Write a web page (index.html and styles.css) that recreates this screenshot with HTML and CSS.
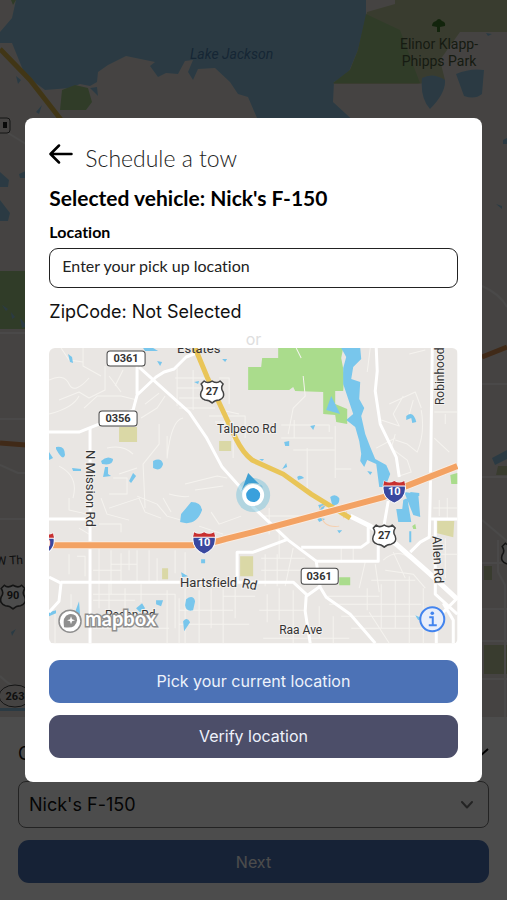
FILE: index.html
```html
<!DOCTYPE html>
<html lang="en">
<head>
  <meta charset="UTF-8">
  <title>Schedule a tow</title>
  <meta name="viewport" content="width=device-width, initial-scale=1.0">
  <link rel="stylesheet" href="styles.css">
</head>
<body>
  <!-- Shared map markers -->
  <svg class="symbols" aria-hidden="true">
    <symbol id="us-shield" viewBox="-13 -13 26 26">
      <path d="M-8 -10 Q-5 -7 0 -10 Q5 -7 8 -10 L11 -7 Q8 -3 11 1 Q13 7 7 9 Q3 9 0 12 Q-3 9 -7 9 Q-13 7 -11 1 Q-8 -3 -11 -7 Z" fill="#fff" stroke="#444" stroke-width="1.5" stroke-linejoin="round"/>
    </symbol>
    <symbol id="interstate" viewBox="-13 -13 26 26">
      <path d="M-10 -10 Q-5 -7 0 -10 Q5 -7 10 -10 Q15 6 0 12 Q-15 6 -10 -10 Z" fill="#3a489f" stroke="#fff"/>
      <path d="M-10 -10 Q-5 -7 0 -10 Q5 -7 10 -10 L11 -5 H-11 Z" fill="#c9302f"/>
      <path d="M-11 -5 H11" stroke="#fff"/>
    </symbol>
  </svg>

  <!-- Page behind the dialog -->
  <main class="page">
    <svg class="page-map" viewBox="0 0 507 717" preserveAspectRatio="xMidYMin slice" role="img" aria-label="Map">
      <rect width="507" height="717" fill="#e7e2dd"/>
      <path class="water" d="M16 0 L12 18 L0 32 V43 H12 L25 75 L45 90 L70 88 L80 84 L90 86 L97 82 L98 72 L108 65 L118 60 L126 56 L155 62 L150 66 L158 77 L166 73 L178 74 L185 61 L193 60 L188 72 L193 80 L198 69 L215 68 L230 82 L238 94 L248 97 L257 118 V125 H358 L333 102 L334 82 L348 74 L358 50 L366 20 V0 Z"/>
      <path class="olive" d="M367 12 L395 4 V0 H507 V32 H460 L440 60 L445 80 L418 84 H333 L350 70 L358 50 Z"/>
      <path class="park" d="M366 14 L400 30 L420 83 H333 L350 70 L358 50 Z"/>
      <path class="park" d="M62 90 L75 85 L88 88 L92 102 L86 110 H60 Z M0 271 H30 V329 H0 Z M11 0 H16 L13 5 Z"/>
      <path class="water" d="M422 78 Q433 72 445 80 Q446 93 430 109 Q420 98 422 78 Z M456 74 Q470 68 484 70 L482 94 Q475 100 464 96 Z M16 76 L21 80 L18 84 Z M90 88 L97 87 L98 96 Z M36 112 L42 105 L39 114 Z M0 172 L9 180 L8 187 H0 Z M0 200 L10 213 L8 221 H0 Z M19 174 L30 169 V178 H20 Z M2 305 L8 309 L6 311 Z M11 312 L15 317 L12 319 Z M20 318 L27 326 L22 328 Z M11 632 L16 629 L12 636 Z M492 458 L507 450 V459 L495 465 Z M496 204 L502 206 V209 Z M503 140 L507 138 V144 H503 Z M486 33 L492 34 L488 36 Z M0 708 H26 V711 H0 Z"/>
      <path class="olive" d="M484 566 H492 V580 H484 Z M484 645 H507 V674 H484 Z M498 466 H507 V475 H496 Z"/>
      <path class="road" d="M0 333 H26 M0 419 H26 M0 465 L18 473 H26 M0 519 H26 M482 286 Q500 294 507 307 M482 384 H507 M482 477 H507 M482 520 L507 541 M482 563 H507 M482 609 H507 M482 641 H507 M482 679 H507 M498 540 V572 L505 585 V717 M8 133 L26 144"/>
      <path d="M0 49 L30 80 L62 121" class="highway"/>
      <path d="M0 443 L26 445 M482 357 L507 347" class="freeway"/>
      <path d="M0 676 Q14 690 26 690" class="road"/>
      <rect x="-28" y="118" width="38" height="15" rx="3" class="plate"/>
      <path d="M3 122 H7 V128 H3 Z" fill="#222"/>
      <text x="190" y="59" class="label lake">Lake Jackson</text>
      <path d="M432 26 Q432 22 436 21 Q439 17 442 21 Q446 22 445 26 L440 27 L440 32 H437 V27 Z" fill="#3f7b2b"/>
      <text x="439" y="49" text-anchor="middle" class="label park-label">Elinor Klapp-</text>
      <text x="439" y="66" text-anchor="middle" class="label park-label">Phipps Park</text>
      <text x="-4" y="565" class="label street" transform="rotate(-3 0 565)">W Th</text>
      <use href="#us-shield" x="-1" y="582" width="28" height="28"/>
      <text x="13" y="599" class="label number" text-anchor="middle">90</text>
      <ellipse cx="15" cy="696" rx="16" ry="11" class="plate"/>
      <text x="15" y="700" class="label number" text-anchor="middle">263</text>
      <use href="#us-shield" x="500" y="540" width="28" height="28"/>
    </svg>

    <section class="panel">
      <div class="panel-head">
        <label for="vehicle">Choose vehicle</label>
        <svg width="20" height="12" viewBox="0 0 20 12" aria-hidden="true"><path d="M1 2 L10 10 L19 2" fill="none" stroke="#000" stroke-width="2"/></svg>
      </div>
      <div class="select-wrap">
        <select id="vehicle">
          <option>Nick's F-150</option>
        </select>
        <svg class="chevron" width="12" height="8" viewBox="0 0 12 8" aria-hidden="true"><path d="M1 1 L6 6.500 L11 1" fill="none" stroke="#777" stroke-width="2" stroke-linecap="round" stroke-linejoin="round"/></svg>
      </div>
      <button type="button" class="btn btn-next">Next</button>
    </section>
  </main>

  <!-- Schedule dialog -->
  <div class="overlay">
    <form class="modal" role="dialog" aria-labelledby="modalTitle">
      <header class="modal-head">
        <button type="button" class="back" aria-label="Back">
          <svg width="24" height="20" viewBox="0 0 24 20"><path d="M22.500 10 H2 M10 1.500 L1.500 10 L10 18.500" fill="none" stroke="#000" stroke-width="2.500" stroke-linecap="round" stroke-linejoin="round"/></svg>
        </button>
        <h1 id="modalTitle">Schedule a tow</h1>
      </header>
      <h2>Selected vehicle: Nick's F-150</h2>
      <label class="field-label" for="location">Location</label>
      <input id="location" class="field" type="text" placeholder="Enter your pick up location">
      <p class="zip">ZipCode: Not Selected</p>
      <p class="or">or</p>

      <svg class="map" viewBox="0 0 408 295" role="img" aria-label="Pick up map">
        <rect width="408" height="295" fill="#e9e6e3"/>
        <!-- parks and fields -->
        <path class="park" d="M199 19 H212 L213 10 H229 V0 H294 L292 10 L295 26 L294 43 H286 V56 L298 61 V76 L287 74 L286 67 L274 66 V44 L246 43 L244 39 L240 42 H199 Z M290 229 H301 V237 H290 Z M401 127 L408 125 V136 H402 Z M363 178 L366 176 L367 181 L364 181 Z"/>
        <path class="olive" d="M70 79 H88 V94 H70 Z M170 93 H182 V103 H170 Z M113 220 H119 V231 H113 Z M191 208 H204 V228 H191 Z M388 173 H405 L404 189 L388 185 Z"/>
        <!-- small streets -->
        <g class="lane">
          <path d="M0 32 Q15 25 20 36 T40 30 M12 0 L20 12 L34 14 M34 0 V18 L52 28 M56 18 V42 L40 50 L30 44 L10 52 M0 66 Q24 60 30 48 M35 60 L48 48 H72 L88 52 M60 28 L72 44 M74 22 L66 38 M92 70 L108 60 L116 48 M96 56 L110 45 M110 76 V96 L94 116 L96 160 M118 88 V110 Q122 72 134 70 M10 118 Q30 128 24 150 M64 130 H78 V146 H60 M70 126 L88 120 M58 100 Q74 96 84 106"/>
          <path d="M126 30 H156 M128 40 H156 M130 50 H160 M130 60 H166 M128 20 V58 M144 22 V62 M170 30 H180 V56 M160 68 H196 V90 M166 74 H184 V110 M136 136 L168 128 L178 130 M146 142 L174 138 M172 62 L190 66"/>
          <path d="M239 86 L244 60 L256 48 L254 28 M247 0 L252 10 M232 77 H280 V84 M232 90 H284 M245 72 V90 M286 78 V130 M258 100 V145 M244 102 H286 M286 121 H302 M321 0 L318 24 M340 56 L366 44 L372 60 M354 48 L344 66 L350 78 L332 72 M346 86 L342 100 L358 112 L362 124 L350 128 M346 92 L358 96 L368 104 Q376 84 372 62 M364 52 L360 66 M327 100 L346 90 M385 64 H408 M385 90 L400 104 M396 66 V76 M360 6 L376 2"/>
          <path d="M20 150 V162 L38 166 M52 150 L58 166 L80 172 M60 160 L90 150 L96 164 L112 170 M88 148 L108 156 L118 168 L132 172 M114 150 L122 164 M120 146 Q136 150 140 148 M150 178 L174 186 M162 164 L170 176 L192 168 M30 180 L40 186 M50 176 H72 V184"/>
          <path d="M20 206 V226 M28 208 H36 V228 M50 200 V260 M62 202 V246 M72 205 V234 M80 202 V222 M88 202 V234 M100 202 V234 M108 210 V234 M126 202 V225 M136 204 V228 M62 216 H88 M44 222 H72 M44 246 H126 V280 M44 252 H86 M60 234 V262 M76 240 V262 M92 236 V254 M118 242 V295 M130 250 V295 M130 262 H184 M136 240 V295 M150 242 V295 M162 240 V280 M174 240 V295 M186 240 V270 M130 276 H200 M174 248 H206 M44 280 H120 M6 262 V295 M22 246 V260"/>
          <path d="M214 168 H268 M220 160 V186 M230 184 V210 M244 200 L236 238 M212 210 H256 M212 222 H252 M216 206 V238 M228 206 V238 M292 200 V214 M304 200 V213 M316 214 L310 240 M326 216 L330 244 M334 212 Q348 200 360 210 M336 222 L364 226 L376 240 M344 204 L356 230 M322 232 H366 M276 248 H330 M280 256 H372 M292 268 H380 M302 280 H384 M318 240 V262 M332 236 V280 M346 232 V280 M360 228 V295 M374 240 V295 M270 258 V290 M284 268 V295 M218 246 V274 M230 240 V272 M244 242 V295 M210 262 H256 M214 290 H300 M320 264 L340 295 M390 152 V168 M398 150 V172 M384 160 H408 M396 190 V230 M384 206 H408"/>
        </g>
        <!-- water -->
        <path class="water" d="M292 0 L297 9 L294 20 L294 36 L299 51 L304 66 L297 72 L306 79 L310 93 L312 106 L311 113 L315 119 L318 112 L327 116 L330 139 H336 L341 126 L337 117 L326 111 L321 99 L316 86 L312 68 L315 60 L310 51 L311 34 L302 31 L304 19 L312 11 L311 0 Z"/>
        <path class="water" d="M282 48 L291 66 L277 62 Z M19 6 L23 9 L24 15 L21 14 Z M94 0 H104 L109 3 H96 Z M108 13 L113 14 L111 18 Z M173 11 H178 L176 14 Z M145 34 L150 33 L149 36 Z M7 99 Q16 97 16 107 Q14 114 7 101 Z M0 104 L4 110 L0 112 Z M52 113 Q58 107 64 111 Q64 118 53 116 Z M56 119 H59 V126 L62 128 L54 129 Z M23 120 L32 121 V123 H24 Z M84 125 L87 128 L82 135 L80 133 Z M104 113 Q112 109 114 116 Q112 124 104 120 Z M131 174 L132 166 L142 154 Q152 154 153 162 Q148 176 136 175 Z M152 211 H156 V215 H152 Z M107 252 L114 252 L112 258 L107 256 Z M137 251 Q144 246 146 253 L144 262 Q137 264 136 257 Z M134 273 Q138 268 141 274 L135 283 Z M26 264 L30 253 L31 266 Z M87 260 L93 255 L96 260 L91 264 Z M0 264 L7 262 V265 L0 268 Z M357 68 Q364 62 367 74 L363 75 L362 70 L357 72 Z M261 78 L266 77 L264 82 Z M235 94 L240 93 V98 L236 98 Z M233 121 L237 115 L238 119 Z M248 129 Q251 126 255 130 L249 132 Z M210 111 H215 L213 113 Z M318 123 L323 124 L321 127 Z"/>
        <path class="water" d="M355 144 L369 146 L371 169 L364 167 Z M347 161 H353 L354 152 L358 150 L362 174 L349 174 Z M360 183 H362 V194 H360 Z M281 149 Q286 145 290 150 Q291 158 283 157 Z M269 157 L278 155 L272 164 Z M267 169 L276 171 L270 174 Z M288 182 L293 182 L290 185 Z M294 160 L302 156 L298 163 Z M366 267 L373 270 L369 272 Z M132 224 L139 228 L133 229 Z M361 144 L370 145 V148 H362 Z"/>
        <!-- roads -->
        <g class="road">
          <path d="M0 84 H30 L50 76 L84 62 L88 47 L107 29 L115 24 L125 21 L137 9 L150 4 M88 18 V46"/>
          <path d="M90 19 L140 64 L157 89 L173 119 L190 138 L204 159 L239 192 L267 213 L271 239 L277 249 L301 266 L326 295"/>
          <path d="M41 79 V295 M0 171 H38 M0 229 L12 235 L10 253 L0 264 M12 234 H244 L258 247 M188 234 V204 L204 204 L239 191"/>
          <path d="M252 199 H312 L319 194 V176 M266 213 H329 V194 M271 238 L257 248 L256 263 L261 295"/>
          <path d="M327 0 L328 23 L326 43 L331 76 L347 109 L350 129 M339 153 L335 176 M383 0 L381 146 L380 189 L371 194 L361 204 M382 171 H408 M386 171 V246 L408 266 M408 250 L387 271 V295 M394 255 L404 272 V295"/>
        </g>
        <path d="M301 168 L321 178 L347 196 L381 226 L408 251" fill="none" stroke="#fff" stroke-width="5"/>
        <path d="M270 163 Q272 154 282 160 M292 156 Q302 160 294 170 M272 167 Q274 180 290 178" fill="none" stroke="#f6cfae" stroke-width="1"/>
        <path class="highway" d="M146 0 L158 29 L172 59 L187 91 Q194 105 203 112 L234 126 L262 146 L301 170"/>
        <path d="M0 197 H143 Q160 196 176 191 L204 184 L334 149 L357 138 L408 118" fill="none" stroke="#f8ece2" stroke-width="8"/>
        <path class="freeway" d="M0 197 H143 Q160 196 176 191 L204 184 L334 149 L357 138 L408 118"/>
        <!-- route plates -->
        <rect x="58" y="3" width="38" height="15" rx="3" class="plate"/>
        <text x="77" y="14" class="label number" text-anchor="middle">0361</text>
        <rect x="50" y="63" width="38" height="15" rx="3" class="plate"/>
        <text x="69" y="74" class="label number" text-anchor="middle">0356</text>
        <rect x="252" y="220" width="37" height="16" rx="3" class="plate"/>
        <text x="270" y="232" class="label number" text-anchor="middle">0361</text>
        <use href="#us-shield" x="150" y="30" width="26" height="26"/>
        <text x="163" y="47" class="label number" text-anchor="middle">27</text>
        <use href="#us-shield" x="322" y="174" width="26" height="26"/>
        <text x="335" y="191" class="label number" text-anchor="middle">27</text>
        <use href="#interstate" x="142" y="181" width="26" height="26"/>
        <text x="155" y="198" class="label number light" text-anchor="middle">10</text>
        <use href="#interstate" x="332" y="130" width="26" height="26"/>
        <text x="345" y="147" class="label number light" text-anchor="middle">10</text>
        <use href="#interstate" x="-19" y="182" width="26" height="26"/>
        <text x="-5" y="199" class="label number light" text-anchor="middle">10</text>
        <!-- street names -->
        <text x="128" y="5" class="label town">Estates</text>
        <text x="168" y="85" class="label street">Talpeco Rd</text>
        <text x="131" y="239" class="label street long">Hartsfield</text>
        <text x="192" y="239" class="label street long" transform="rotate(12 192 239)">Rd</text>
        <text x="230" y="286" class="label street">Raa Ave</text>
        <text x="56" y="271" class="label street">Pecan Rd</text>
        <text x="37" y="102" class="label street long" transform="rotate(90 37 102)">N Mission Rd</text>
        <text x="383" y="188" class="label street long" transform="rotate(87 383 188)">Allen Rd</text>
        <text x="395" y="57" class="label street" transform="rotate(-90 395 57)">Robinhood</text>
        <!-- current position -->
        <circle cx="204" cy="147" r="17" fill="#7cc4de" fill-opacity="0.5"/>
        <path d="M199 125 L192 144 Q196 134 204 135 Q212 135 214 140 Z" fill="#3e9fd2"/>
        <circle cx="204" cy="147" r="9" fill="#3aa0dc" stroke="#fff" stroke-width="4"/>
        <!-- attribution -->
        <circle cx="21" cy="273" r="11" fill="#fff" stroke="#8f8f8f" stroke-width="1.500"/>
        <path d="M15 279 Q13 268 20 266 Q28 265 28 272 Q27 281 15 279 Z" fill="#8f8f8f"/>
        <path d="M22 268 L23 271 L26 272 L23 273 L22 276 L21 273 L18 272 L21 271 Z" fill="#fff"/>
        <text x="36" y="278" class="brand">mapbox</text>
        <circle cx="383" cy="271" r="12" fill="#e9eefa" stroke="#4384ee" stroke-width="2"/>
        <circle cx="383" cy="265" r="1.800" fill="#4384ee"/>
        <path d="M380 269 H383.500 V277 M379.500 277 H387.500" fill="none" stroke="#4384ee" stroke-width="2"/>
      </svg>

      <div class="actions">
        <button type="button" class="btn btn-pick">Pick your current location</button>
        <button type="button" class="btn btn-verify">Verify location</button>
      </div>
    </form>
  </div>
</body>
</html>
```
FILE: styles.css
```css
* { box-sizing: border-box; }
body {
  margin: 0;
  font-family: Inter, sans-serif;
  font-variant-ligatures: none;
  color: #111;
  background: #fff;
}
h1, h2, p { margin: 0; }
button, input, select { font: inherit; }
.symbols {
  position: absolute;
  width: 0;
  height: 0;
}

/* Page */
.page {
  display: flex;
  flex-direction: column;
  height: 100vh;
}
.page-map {
  display: block;
  width: 100%;
  flex: 1;
  min-height: 0;
}
.panel {
  padding: 24px 18px 17px;
}
.panel-head {
  display: flex;
  justify-content: space-between;
  align-items: center;
  height: 24px;
  margin-bottom: 16px;
  font-size: 18px;
}
.select-wrap {
  position: relative;
  margin-bottom: 12px;
}
.select-wrap select {
  display: block;
  width: 100%;
  height: 47px;
  padding: 0 10px;
  border: 1px solid #777;
  border-radius: 8px;
  background: #fff;
  color: #111;
  font-size: 18px;
  appearance: none;
}
.chevron {
  position: absolute;
  right: 16px;
  top: 20px;
}

/* Buttons */
.btn {
  display: block;
  width: 100%;
  height: 43px;
  border: none;
  border-radius: 11px;
  color: #eef2fb;
  font-size: 16px;
  cursor: pointer;
}
.btn-next {
  background: #4a72b5;
  color: #fff;
}
.btn-pick { background: #4c72b6; }
.btn-verify { background: #4c4e69; }

/* Dialog */
.overlay {
  position: fixed;
  inset: 0;
  display: flex;
  align-items: center;
  justify-content: center;
  background: rgba(0, 0, 0, 0.7);
}
.modal {
  width: 90%;
  padding: 24px;
  border-radius: 8px;
  background: #fff;
}
.modal-head {
  display: flex;
  gap: 12px;
  height: 32px;
  margin-bottom: 12px;
}
.back {
  display: flex;
  align-items: center;
  height: 24px;
  padding: 0;
  border: none;
  background: none;
  cursor: pointer;
}
.modal h1 {
  font-family: Lato, sans-serif;
  font-size: 23px;
  font-weight: 300;
  line-height: 32px;
  color: #222;
}
.modal h2 {
  margin-bottom: 12px;
  font-family: Lato, sans-serif;
  font-size: 21px;
  font-weight: 700;
  line-height: 24px;
  color: #000;
}
.field-label {
  display: block;
  margin-bottom: 6px;
  font-family: Lato, sans-serif;
  font-size: 16px;
  font-weight: 700;
  line-height: 20px;
  color: #000;
}
.field {
  display: block;
  width: 100%;
  height: 40px;
  padding: 0 12px 5px;
  border: 1px solid #222;
  border-radius: 9px;
  background: #fff;
  font-family: Lato, sans-serif;
  font-size: 16px;
}
.field::placeholder {
  color: #222;
  opacity: 1;
}
.zip {
  margin-top: 12px;
  font-size: 18px;
  line-height: 24px;
}
.or {
  margin-top: 6px;
  font-size: 16px;
  line-height: 18px;
  text-align: center;
  color: #dedede;
}
.map {
  display: block;
  width: 100%;
  height: auto;
  border-radius: 6px;
}
.actions {
  display: grid;
  gap: 12px;
  margin-top: 16px;
}

/* Map drawing */
.water { fill: #78c6ec; }
.park { fill: #aadc8c; }
.olive { fill: #dad8a6; }
.page-map .water { fill: #8fc4e2; }
.page-map .park { fill: #a0c888; }
.page-map .olive { fill: #c0ca9e; }
.road {
  fill: none;
  stroke: #fff;
  stroke-width: 3;
  stroke-linejoin: round;
}
.page-map .road {
  stroke: #f7f5f3;
  stroke-width: 2;
}
.lane {
  fill: none;
  stroke: #f5f3ef;
  stroke-width: 1;
  stroke-linejoin: round;
}
.highway {
  fill: none;
  stroke: #e9c558;
  stroke-width: 5;
}
.freeway {
  fill: none;
  stroke: #f3a263;
  stroke-width: 6;
}
.page-map .highway { stroke: #d9b64c; }
.page-map .freeway {
  stroke: #d88c50;
  stroke-width: 5;
}
.plate {
  fill: #fff;
  stroke: #444;
  stroke-width: 1;
}
.page-map .plate { fill: #e7e2dd; }
.label {
  font-family: Roboto, sans-serif;
  fill: #333;
}
.street {
  font-size: 12px;
  paint-order: stroke;
  stroke: #f2f0ee;
  stroke-width: 2;
}
.long { font-size: 13px; }
.page-map .street { stroke: none; }
.town { font-size: 13px; }
.number {
  font-size: 11px;
  font-weight: 700;
}
.light { fill: #fff; }
.lake {
  font-size: 14px;
  font-style: italic;
  fill: #4a80b0;
}
.park-label {
  font-size: 14px;
  fill: #4c5d3e;
}
.brand {
  font-family: Lato, sans-serif;
  font-size: 20px;
  font-weight: 700;
  fill: #fff;
  paint-order: stroke;
  stroke: #8f8f8f;
  stroke-width: 3;
}
```
